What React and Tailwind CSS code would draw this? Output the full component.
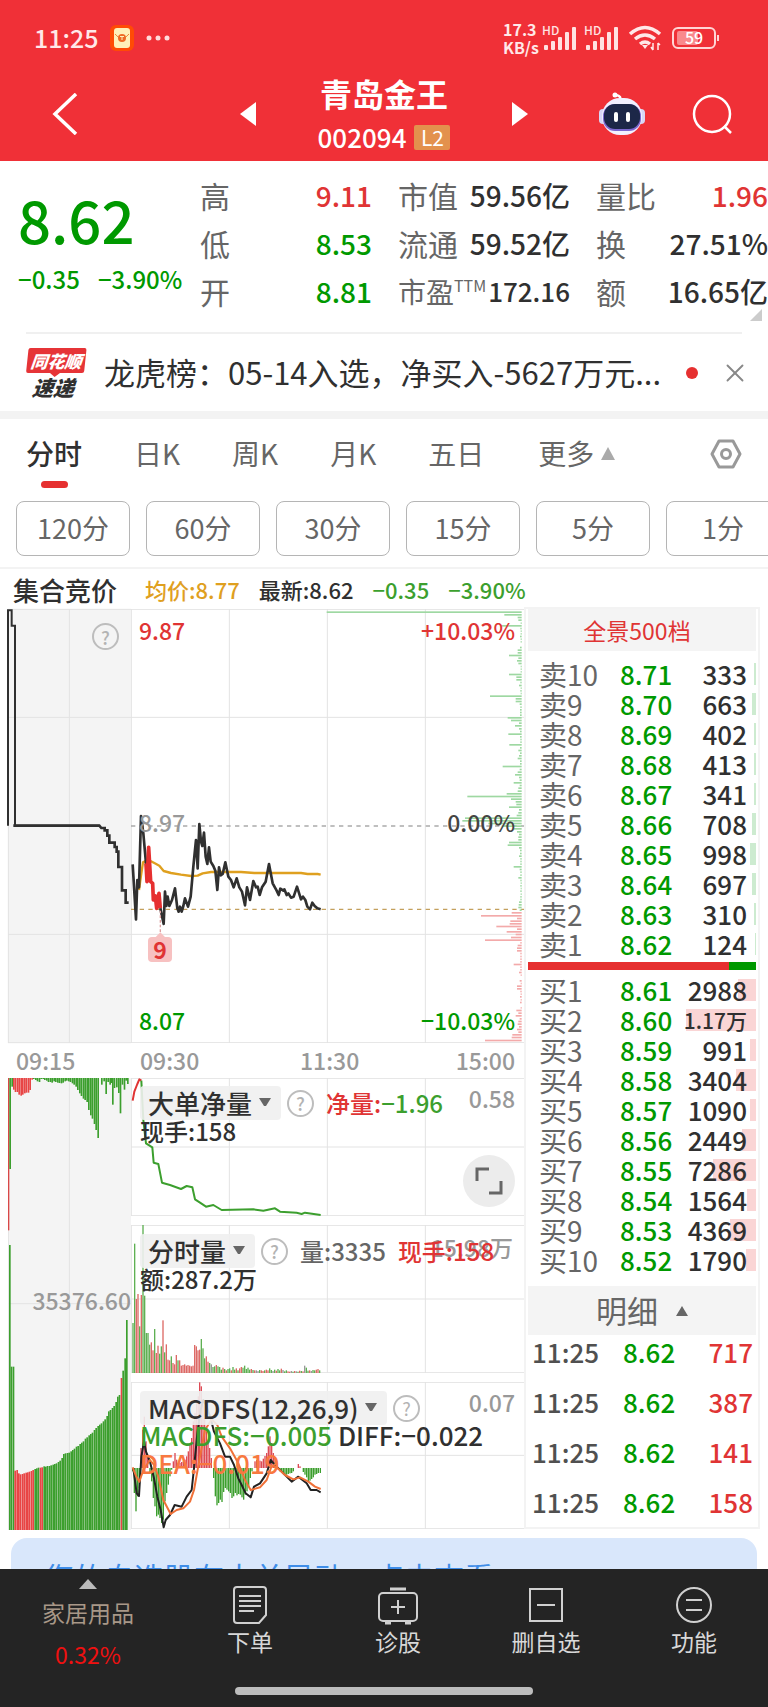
import React from 'react';
import { X } from 'lucide-react';

const stats = [
  [['高', '9.11', 'text-[#e03434]'], ['低', '8.53', 'text-[#009900]'], ['开', '8.81', 'text-[#009900]']],
  [['市值', '59.56亿', 'text-[#303030]'], ['流通', '59.52亿', 'text-[#303030]'], ['市盈', '172.16', 'text-[26px] text-[#303030]']],
  [['量比', '1.96', 'text-[#e03434]'], ['换', '27.51%', 'text-[#303030]'], ['额', '16.65亿', 'text-[#303030]']],
];

const tabs = ['分时', '日K', '周K', '月K', '五日'];
const periods = ['120分', '60分', '30分', '15分', '5分', '1分'];

// label, price, volume, depth bar width in px
const asks = [
  ['卖10', '8.71', '333', 2], ['卖9', '8.70', '663', 4], ['卖8', '8.69', '402', 2], ['卖7', '8.68', '413', 2],
  ['卖6', '8.67', '341', 2], ['卖5', '8.66', '708', 4], ['卖4', '8.65', '998', 6], ['卖3', '8.64', '697', 4],
  ['卖2', '8.63', '310', 2], ['卖1', '8.62', '124', 1],
];
const bids = [
  ['买1', '8.61', '2988', 18], ['买2', '8.60', '1.17万', 70], ['买3', '8.59', '991', 6], ['买4', '8.58', '3404', 20],
  ['买5', '8.57', '1090', 6], ['买6', '8.56', '2449', 14], ['买7', '8.55', '7286', 43], ['买8', '8.54', '1564', 9],
  ['买9', '8.53', '4369', 26], ['买10', '8.52', '1790', 10],
];
const trades = ['717', '387', '141', '158'];

// chart units are thirds of a pixel
const priceA = '5,766 15,931 19,813 24,835 30,621 37,673 45,763 48,800';
const priceHot = '45,763 48,818 53,715 59,818 65,823 67,873 73,861 77,898 84,853 88,898';
const priceB = '88,898 98,945 102,848 106,891 110,863 115,891 123,873 132,838 139,898 143,908 147,893 152,908 157,891 162,868 171,893 179,863 187,773 195,693 200,778 205,645 210,698 214,711 219,671 224,743 229,765 234,715 239,758 247,771 253,785 259,843 264,775 269,799 275,795 283,760 292,803 300,813 308,835 317,808 325,835 333,848 342,889 348,835 357,873 367,816 375,835 380,833 386,858 393,835 404,818 414,765 425,823 437,845 443,858 448,839 457,845 460,841 467,858 472,853 480,866 488,863 498,833 510,871 516,863 523,873 529,893 537,901 544,881 551,891 559,898 569,901';
const average = '24,843 30,800 36,760 46,755 57,755 70,762 85,770 98,786 120,792 150,797 180,801 200,800 215,793 240,789 330,789 370,792 510,792 530,795 560,795 569,797';

const profile = [
  585, 52, 12, 10, 3, 62, 4, 3, 3, 5, 3, 3, 0, 5, 12, 12, 38, 10, 14, 10, 3, 3, 3, 38, 16, 16, 4, 8, 3, 4, 3, 95, 18, 18, 6, 4, 5, 5, 5, 42,
  32, 8, 20, 8, 5, 40, 5, 4, 4, 37, 5, 10, 5, 8, 12, 5, 5, 57, 6, 12, 20, 8, 6, 24, 6, 10, 12, 45, 163, 32, 18, 16, 38, 8, 10, 15, 170, 178, 100, 60,
  24, 14, 8, 10, 10, 38, 42, 8, 5, 5, 8, 4, 4, 4, 24, 6, 4, 4, 10, 4, 3, 4, 3, 4, 3, 4, 4, 8, 9, 10, 6, 30, 122, 14, 34, 36, 76, 14, 45, 18,
  32, 110, 4, 12, 14, 14, 4, 4, 4, 4, 24, 4, 4, 8, 3, 0, 6, 3, 14, 14, 4, 3, 5, 3, 5, 0, 3, 16, 10, 18, 6, 10, 12, 8, 14, 10, 28, 30, 110,
];

const volume = [
  150, 388, 222, 237, 140, 234, 444, 232, 120, 120, 85, 92, 68, 132, 60, 82, 58, 80, 158, 62, 86, 40, 38, 50, 30, 26, 54, 38, 38, 22, 24, 26, 22, 24, 22, 20, 22,
  84, 80, 68, 70, 102, 74, 44, 50, 34, 30, 26, 18, 20, 24, 20, 18, 10, 16, 12, 8, 12, 14, 8, 18, 10, 14, 8, 14, 18, 16, 22, 12, 16, 10, 12, 9, 8, 8, 6, 9, 8,
  6, 8, 10, 8, 14, 9, 6, 10, 7, 12, 8, 13, 9, 5, 8, 5, 4, 6, 4, 6, 5, 4, 7, 6, 5, 22, 16, 7, 8, 6, 9, 8, 10, 12, 8,
];
const volumeTone = 'ggrrgrgggggrrgrrggrgrrrgrrrgrrrrrrrrrrrrrgggrrgwggrgggrgrggrggrgrrgggggrgrwwgrrgrrggwgrggrwggrrwgrwgrgrwggrwggrrgww';

const macd = [
  [5, 10], [10, 75], [15, 130], [20, 85], [25, 60], [30, -60], [35, -115], [40, -154], [45, -80], [50, -40], [57, 15], [62, 40], [67, 90], [72, 115],
  [77, 145], [82, 140], [87, 150], [92, 165], [97, 155], [102, 100], [107, 75], [112, 50], [117, 25], [122, 5], [127, -20], [132, -45], [137, -25],
  [142, -15], [147, -15], [152, -18], [157, -20], [162, -25], [167, -35], [172, -50], [177, -70], [182, -90], [187, -140], [192, -165], [197, -200],
  [202, -215], [206, -257], [211, -245], [216, -190], [221, -150], [226, -110], [231, -80], [236, -60], [241, -30], [248, 30], [253, 85], [258, 112],
  [263, 105], [268, 95], [273, 102], [278, 72], [283, 60], [288, 65], [293, 70], [298, 75], [303, 90], [308, 85], [313, 75], [318, 82], [323, 78],
  [328, 80], [333, 88], [338, 95], [343, 80], [348, 70], [353, 55], [358, 30], [363, 10], [372, -20], [377, -24], [382, -25], [387, -22], [392, -20],
  [397, -28], [402, -36], [407, -45], [412, -65], [417, -95], [422, -75], [427, -45], [432, -30], [437, -8], [442, 5], [447, 10], [452, 15], [457, 18],
  [462, 20], [467, 20], [472, 18], [477, 16], [482, 15], [487, 10], [502, -12], [507, -5], [517, 12], [522, 20], [527, 28], [532, 40], [537, 38],
  [542, 33], [547, 28], [552, 20], [557, 18], [562, 15], [568, 15],
];

const hanging = [
  [6, 273], [12, 26], [17, 35], [22, 42], [28, 42], [33, 50], [39, 53], [44, 50], [50, 46], [55, 44], [61, 44], [66, 36], [72, 5], [77, 3], [83, 6],
  [88, 10], [94, 12], [99, 3], [105, 3], [110, 6], [116, 8], [121, 12], [127, 12], [132, 14], [138, 10], [143, 12], [149, 14], [154, 15], [160, 16],
  [165, 14], [171, 10], [176, 8], [182, 10], [187, 12], [193, 16], [198, 20], [204, 26], [209, 36], [215, 46], [220, 54], [226, 62], [231, 66],
  [237, 72], [242, 96], [248, 112], [253, 122], [259, 138], [264, 156], [270, 180], [281, 20], [288, 10], [294, 48], [300, 12], [306, 20], [310, 15],
  [314, 80], [319, 30], [326, 28], [332, 45], [337, 106], [343, 20], [349, 35], [354, 8], [359, 18],
];
const matched = [
  855, 490, 490, 178, 180, 170, 167, 168, 170, 172, 173, 175, 177, 180, 183, 185, 187, 187, 188, 191, 190, 192, 192, 194, 196, 198, 200, 204, 208, 216,
  228, 230, 231, 232, 236, 240, 244, 250, 252, 258, 262, 266, 274, 278, 284, 288, 292, 300, 306, 312, 316, 320, 326, 332, 342, 356, 360, 366, 372, 384, 400, 405, 456, 478, 515, 630,
];

const isHotMatched = (i) => (i >= 3 && i <= 13) || (i >= 17 && i <= 18) || i === 62;

const Grid = ({ w, h, xs, ys }) => (
  <g stroke="#e3e3e3" strokeWidth="3">
    {xs.map((x) => <path key={x} d={`M${x} 0V${h}`} />)}
    {ys.map((y) => <path key={y} d={`M0 ${y}H${w}`} />)}
  </g>
);

const Help = () => (
  <button aria-label="帮助" className="flex h-[27px] w-[27px] shrink-0 items-center justify-center rounded-full border-2 border-[#bdbdbd] text-lg leading-none text-[#b3b3b3]">?</button>
);

const Indicator = ({ name, label }) => (
  <label className="relative block h-[34px] rounded bg-[#f0f0f0]/90">
    <select aria-label={label} className="h-full appearance-none bg-transparent pr-7 pl-2 text-[26px] leading-[34px] font-medium text-[#303030]">
      <option>{name}</option>
    </select>
    <svg className="pointer-events-none absolute top-3 right-2.5" width="12" height="9" viewBox="0 0 12 9"><path d="M0 0H12L7 8H5Z" fill="#666" /></svg>
  </label>
);

const Signal = () => (
  <svg className="overflow-visible" width="36" height="24" viewBox="0 0 36 24" fill="#ffe2e2">
    <text x="0" y="9" fontSize="12" fontWeight="500">HD</text>
    <rect x="2" y="19" width="4" height="5" rx="1" />
    <rect x="9" y="15" width="4" height="9" rx="1" />
    <rect x="16" y="11" width="4" height="13" rx="1" />
    <rect x="23" y="6" width="4" height="18" rx="1" />
    <rect x="30" y="1" width="4" height="23" rx="1" />
  </svg>
);

const StatusBar = () => (
  <div className="flex h-[75px] items-center pr-12 pl-[34px] text-[#ffe8e8]">
    <span className="text-[25px] font-medium">11:25</span>
    <svg className="ml-3" width="24" height="26" viewBox="0 0 24 26">
      <rect width="24" height="26" rx="6" fill="#ff4b05" />
      <rect x="4" y="3" width="16" height="20" rx="3" fill="#fff0b8" />
      <path d="M5 9Q12 18 19 9" fill="none" stroke="#e88b3c" />
      <circle cx="12" cy="13" r="4" fill="#ef6a24" />
      <path d="M10 11.500H14M12 11.500V15" stroke="#fff0b8" />
    </svg>
    <svg className="ml-3" width="24" height="6" viewBox="0 0 24 6" fill="#ffdcdc"><circle cx="3" cy="3" r="2.500" /><circle cx="12" cy="3" r="2.500" /><circle cx="21" cy="3" r="2.500" /></svg>
    <div className="ml-auto w-[39px] text-base leading-[18px] font-bold">17.3<br />KB/s</div>
    <Signal />
    <div className="ml-1.5"><Signal /></div>
    <svg className="ml-2" width="34" height="26" viewBox="0 0 34 26" fill="none" stroke="#ffe8e8" strokeWidth="3.500">
      <path d="M2 9Q17 -4 32 9M7 14Q17 6 27 14M12 19Q17 15 22 19" />
      <path d="M14 20L17 24L20 20Z" fill="#ffe8e8" stroke="none" />
      <path d="M25 18V25M30 18V25M23 22L25 25M30 18L32 20" strokeWidth="1.500" />
    </svg>
    <svg className="ml-2.5 overflow-visible" width="48" height="22" viewBox="0 0 48 22">
      <rect x="1" y="1" width="42" height="20" rx="5" fill="none" stroke="#ffd5d5" strokeWidth="2" />
      <rect x="5" y="4" width="21" height="14" rx="2" fill="#f9898c" />
      <path d="M46 8V14" stroke="#ffd5d5" strokeWidth="2" />
      <text x="22" y="17" textAnchor="middle" fontSize="16" fontWeight="500" fill="#fff">59</text>
    </svg>
  </div>
);

const Header = () => (
  <header className="bg-[#f03037] text-white">
    <StatusBar />
    <nav className="grid h-[86px] grid-cols-[1fr_289px_1fr] pb-3">
      <div className="flex items-center pl-[52px]">
        <button aria-label="返回">
          <svg width="26" height="42" viewBox="0 0 26 42" fill="none" stroke="#fff" strokeWidth="3.500"><path d="M24 1L3 21L24 41" /></svg>
        </button>
      </div>
      <div className="flex items-center justify-between">
        <button aria-label="上一只"><svg width="16" height="24" viewBox="0 0 16 24"><path d="M16 0V24L0 12Z" fill="#fff" /></svg></button>
        <div>
          <h1 className="text-center text-[32px] leading-9 font-bold">青岛金王</h1>
          <div className="mt-2.5 flex items-center gap-2">
            <span className="text-[26px] leading-8 font-medium">002094</span>
            <span className="h-[25px] w-9 rounded-xs bg-[#e3914d] text-center text-[21px] leading-[25px]">L2</span>
          </div>
        </div>
        <button aria-label="下一只"><svg width="16" height="24" viewBox="0 0 16 24"><path d="M0 0V24L16 12Z" fill="#fff" /></svg></button>
      </div>
      <div className="flex items-center justify-end gap-[46px] pr-9">
        <button aria-label="智能助手">
          <svg width="48" height="44" viewBox="0 0 48 44">
            <path d="M22 9Q24 4 18 3" fill="none" stroke="#fff" strokeWidth="2.500" />
            <circle cx="17" cy="3" r="2.500" fill="#fff" />
            <rect x="1" y="17" width="8" height="15" rx="4" fill="#d8d6f5" />
            <rect x="39" y="17" width="8" height="15" rx="4" fill="#d8d6f5" />
            <rect x="4" y="6" width="40" height="37" rx="18" fill="#f2f0ff" />
            <rect x="5" y="12" width="38" height="27" rx="12" fill="#7d68cf" />
            <rect x="6" y="12" width="36" height="25" rx="11" fill="#1c2748" />
            <rect x="16" y="20" width="4" height="10" rx="2" fill="#fff" />
            <rect x="28" y="20" width="4" height="10" rx="2" fill="#fff" />
          </svg>
        </button>
        <button aria-label="搜索">
          <svg width="40" height="40" viewBox="0 0 40 40" fill="none" stroke="#fff" strokeWidth="2.500"><circle cx="20" cy="20" r="18" /><path d="M32 32L39 39" /></svg>
        </button>
      </div>
    </nav>
  </header>
);

const Quote = () => (
  <section className="flex h-[171px] pt-[10px] font-medium">
    <div className="w-[200px] shrink-0 pl-[18px] text-[#009900]">
      <div className="mt-3 text-[58px] leading-[72px]">8.62</div>
      <div className="mt-1.5 flex gap-[18px] text-2xl leading-9 whitespace-nowrap"><span>−0.35</span><span>−3.90%</span></div>
    </div>
    <div className="relative grid flex-1 grid-cols-3 gap-x-[26px]">
      {stats.map((col) => (
        <dl key={col[0][0]} className="text-[28px] leading-[48px] whitespace-nowrap">
          {col.map(([label, value, tone]) => (
            <div key={label} className="flex h-12 justify-between">
              <dt className={label === '市盈' ? 'flex text-[28px] font-normal text-[#666]' : 'text-[30px] font-normal text-[#666]'}>
                {label}
                {label === '市盈' && <span className="text-base leading-9">TTM</span>}
              </dt>
              <dd className={tone}>{value}</dd>
            </div>
          ))}
        </dl>
      ))}
      <svg className="absolute right-1.5 bottom-[11px]" width="12" height="12" viewBox="0 0 12 12"><path d="M12 0V12H0Z" fill="#ccc" /></svg>
    </div>
  </section>
);

const News = () => (
  <section className="mx-[26px] flex h-[79px] items-center border-t-2 border-[#f0f0f0]">
    <div className="w-[58px] -skew-x-6 text-center leading-none font-black italic">
      <div className="rounded-xs bg-[#e63437] py-1 text-[17px] text-white">同花顺</div>
      <svg className="mx-auto" width="10" height="4" viewBox="0 0 10 4"><path d="M0 0H10L5 4Z" fill="#e63437" /></svg>
      <div className="text-[21px] text-[#303030]">速递</div>
    </div>
    <p className="ml-5 flex-1 text-[31px] whitespace-nowrap text-[#303030]">龙虎榜：05-14入选，净买入-5627万元...</p>
    <span className="mr-[22px] h-3 w-3 rounded-full bg-[#e63030]" />
    <button aria-label="关闭" className="-mr-2"><X size={30} strokeWidth={1.5} color="#888" /></button>
  </section>
);

const Tabs = () => (
  <section className="h-[158px] overflow-hidden border-t-8 border-b-2 border-[#f3f3f3]">
    <div className="flex h-[82px] items-start gap-[52px] px-[26px] pt-3.5 text-[28px] leading-10 text-[#666]">
      {tabs.map((tab, i) => (
        <button key={tab} className={i === 0 ? 'flex flex-col items-center font-medium text-[#303030]' : ''}>
          {tab}
          {i === 0 && <span className="mt-2 h-[7px] w-[27px] rounded-full bg-[#e63030]" />}
        </button>
      ))}
      <button className="flex items-center gap-[7px] pl-0.5">
        更多
        <svg width="14" height="13" viewBox="0 0 14 13"><path d="M7 0L14 13H0Z" fill="#aaa" /></svg>
      </button>
      <button aria-label="设置" className="ml-auto pt-1.5">
        <svg width="32" height="30" viewBox="0 0 32 30" fill="none" stroke="#999" strokeWidth="3"><path d="M9 2H23L30 15L23 28H9L2 15Z" strokeLinejoin="round" /><circle cx="16" cy="15" r="4.500" /></svg>
      </button>
    </div>
    <div className="flex gap-4 pl-4 text-[27px] text-[#666]">
      {periods.map((p) => (
        <button key={p} className="h-[55px] w-[114px] shrink-0 rounded-lg border border-[#b5b5b5]">{p}</button>
      ))}
    </div>
  </section>
);

const PriceChart = () => (
  <div className="grid h-[434px] grid-cols-[123px_1fr] font-medium">
    <div className="relative bg-[#f4f4f4]">
      <svg className="h-full w-full overflow-visible" viewBox="0 0 369 1302" preserveAspectRatio="none">
        <Grid w={369} h={1302} xs={[1, 184]} ys={[1, 325, 976, 1301]} />
        <path d="M0 650V4H11V50H21V650H274" fill="none" stroke="#303030" strokeWidth="6" />
        <path d="M16 650H274L280 657H290V664H298V680H304V701H320V714H326V728H331V774H342V844H353V881H362" fill="none" stroke="#303030" strokeWidth="8" />
      </svg>
      <div className="absolute top-3.5 right-3"><Help /></div>
    </div>
    <div className="relative text-[23px] leading-7">
      <svg className="h-full w-full" viewBox="0 0 1179 1302" preserveAspectRatio="none">
        <Grid w={1179} h={1302} xs={[1, 295, 589, 883]} ys={[1, 325, 976, 1301]} />
        <path d="M0 651H1179" stroke="#aaa" strokeWidth="5" strokeDasharray="13 13" />
        <path d="M0 901H1179" stroke="#c4a05c" strokeWidth="4" strokeDasharray="13 13" />
        {profile.map((len, i) => (
          <rect key={i} x={1172 - len} y={Math.round(7 + i * 8.13)} width={len} height="5" fill={i < 111 ? '#9ed8a2' : '#f3aaaa'} />
        ))}
        <g fill="none" strokeLinejoin="round">
          <polyline points={average} stroke="#dfa01f" strokeWidth="7" />
          <polyline points={priceA} stroke="#303030" strokeWidth="8" />
          <polyline points={priceHot} stroke="#e63030" strokeWidth="11" />
          <polyline points={priceB} stroke="#303030" strokeWidth="8" />
        </g>
        <path d="M88 905V970" stroke="#dda0a0" strokeWidth="4" strokeDasharray="8 6" />
        <path d="M72 986L88 970L104 986Z" fill="#f7c1c1" />
      </svg>
      <span className="absolute top-[7px] left-2 text-[#e03434]">9.87</span>
      <span className="absolute top-[7px] right-[9px] text-[#e03434]">+10.03%</span>
      <span className="absolute top-[199px] left-2 text-[#999]">8.97</span>
      <span className="absolute top-[199px] right-[9px] text-[#444]">0.00%</span>
      <span className="absolute bottom-[9px] left-2 text-[#009900]">8.07</span>
      <span className="absolute right-[9px] bottom-[9px] text-[#009900]">−10.03%</span>
      <span className="absolute top-82 left-[17px] h-[25px] w-6 rounded bg-[#f7c1c1] text-center leading-[25px] font-bold text-[#e03434]">9</span>
    </div>
  </div>
);

const AuctionVolume = () => (
  <div className="relative bg-[#f4f4f4]">
    <svg className="h-full w-full" viewBox="0 0 369 1356" preserveAspectRatio="none">
      <Grid w={369} h={1356} xs={[1, 184]} ys={[677]} />
      <rect x="0" y="0" width="4" height="457" fill="#d94747" />
      {hanging.map(([x, len]) => (
        <rect key={x} x={x - 2} y="0" width="5" height={len} fill={x > 14 && x < 75 ? '#e84545' : '#3c9f2e'} />
      ))}
      {matched.map((len, i) => (
        <rect key={i} x={Math.round(3 + i * 5.4)} y={1356 - len} width="5" height={len} fill={isHotMatched(i) ? '#e84545' : '#3c9f2e'} />
      ))}
    </svg>
    <span className="absolute top-[208px] right-0 text-[23px] leading-7 font-medium text-[#999]">35376.60</span>
  </div>
);

const NetVolume = () => (
  <div className="relative h-[138px]">
    <svg className="h-full w-full" viewBox="0 0 1179 414" preserveAspectRatio="none">
      <Grid w={1179} h={414} xs={[1, 295, 589, 883]} ys={[1, 207, 413]} />
      <g fill="none" strokeWidth="6" strokeLinejoin="round">
        <polyline points="5,68 10,41 19,18 25,4 31,8" stroke="#e03434" />
        <polyline points="31,8 37,126 45,196 64,208 68,254 82,258 93,314 117,321 150,333 167,324 184,328 192,364 207,374 225,386 247,381 272,396 367,394 397,398 432,391 447,401 497,404 512,408 522,404 569,411" stroke="#3c9f2e" />
      </g>
    </svg>
    <div className="absolute top-2 left-[9px] flex items-center gap-1.5 text-2xl font-medium whitespace-nowrap">
      <Indicator name="大单净量" label="指标一" />
      <Help />
      <span className="pl-1.5 text-[#e03434]">净量:<b className="font-medium text-[#3c9f2e]">−1.96</b></span>
    </div>
    <span className="absolute top-[39px] left-[9px] text-2xl leading-7 font-medium text-[#303030]">现手:158</span>
    <span className="absolute top-1.5 right-[9px] text-[23px] leading-7 font-medium text-[#999]">0.58</span>
    <button aria-label="全屏" className="absolute right-[9px] bottom-[9px] flex h-[52px] w-[52px] items-center justify-center rounded-full bg-[#ececec]">
      <svg width="28" height="28" viewBox="0 0 28 28" fill="none" stroke="#666" strokeWidth="3"><path d="M2 14V2H14M26 14V26H14" /></svg>
    </button>
  </div>
);

const MinuteVolume = () => (
  <div className="relative h-[148px]">
    <svg className="h-full w-full" viewBox="0 0 1179 444" preserveAspectRatio="none">
      <Grid w={1179} h={444} xs={[1, 295, 589, 883]} ys={[1, 222, 443]} />
      {volume.map((len, i) => (
        <rect key={i} x={4 + i * 5} y={444 - len} width="4" height={len} fill={volumeTone[i] === 'g' ? '#5fb053' : volumeTone[i] === 'r' ? '#dd6a66' : '#999'} />
      ))}
    </svg>
    <span className="absolute top-2 right-[11px] text-[23px] leading-7 font-medium text-[#999]">15.98万</span>
    <div className="absolute top-[9px] left-[9px] flex items-center gap-1.5 text-2xl font-medium whitespace-nowrap">
      <Indicator name="分时量" label="指标二" />
      <Help />
      <span className="pl-1.5 text-[#666]">量:3335</span>
      <span className="pl-1.5 text-[#e03434]">现手:158</span>
    </div>
    <span className="absolute top-10 left-[9px] text-2xl leading-7 font-medium text-[#303030]">额:287.2万</span>
  </div>
);

const Macd = () => (
  <div className="relative h-[147px]">
    <svg className="h-full w-full" viewBox="0 0 1179 441" preserveAspectRatio="none">
      <Grid w={1179} h={441} xs={[1, 295, 589, 883]} ys={[1, 220, 440]} />
      {macd.map(([x, len]) => (
        <rect key={x} x={x - 2} y={len > 0 ? 258 : 258 + len} width="4" height={Math.abs(len)} fill={len > 0 ? '#3c9f2e' : '#dd4b55'} />
      ))}
      <g fill="none" strokeWidth="6" strokeLinejoin="round">
        <polyline points="7,259 17,334 24,342 31,224 39,179 45,209 57,239 69,289 79,344 89,384 98,436 104,414 117,399 131,369 152,374 167,344 182,324 189,259 199,154 209,84 217,54 227,74 239,109 249,149 267,184 282,224 297,224 309,249 322,289 332,309 344,334 359,346 369,314 387,304 407,274 419,234 432,249 452,269 482,299 502,284 527,304 539,324 557,324 569,331" stroke="#222" />
        <polyline points="5,256 15,282 25,299 37,264 57,234 69,249 82,284 97,354 119,396 137,384 157,379 177,359 189,324 207,224 222,144 242,112 259,129 272,164 297,199 322,244 342,294 359,324 387,316 407,294 422,252 437,256 462,279 487,292 507,286 532,299 552,314 569,321" stroke="#f07138" />
      </g>
    </svg>
    <div className="absolute top-[9px] left-[9px] flex items-center gap-1.5">
      <Indicator name="MACDFS(12,26,9)" label="指标三" />
      <Help />
    </div>
    <div className="absolute top-[39px] left-[9px] text-[26px] leading-7 font-medium whitespace-nowrap">
      <div className="flex gap-1.5"><span className="text-[#3c9f2e]">MACDFS:−0.005</span><span className="text-[#303030]">DIFF:−0.022</span></div>
      <div className="text-[#f87840]">DEA:−0.019</div>
    </div>
    <span className="absolute top-1.5 right-[9px] text-[23px] leading-7 font-medium text-[#999]">0.07</span>
  </div>
);

const BookTable = ({ rows, fill, label: title }) => (
  <table aria-label={title} className="w-full table-fixed border-collapse">
    <tbody>
      {rows.map(([label, price, amount, depth]) => (
        <tr key={label} className="h-[30px] leading-[30px] whitespace-nowrap">
          <th className="w-[92px] p-0 pl-[11px] text-left text-[28px] font-normal text-[#666]">{label}</th>
          <td className="w-[58px] p-0 text-[26px] font-medium text-[#009900]">{price}</td>
          <td className={`relative p-0 pr-[9px] text-right font-medium text-[#303030] ${amount.includes('万') ? 'text-[21px]' : 'text-[26px]'}`}>
            <span className={`absolute top-1 right-0 h-[22px] ${fill}`} style={{ width: depth }} />
            <span className="relative">{amount}</span>
          </td>
        </tr>
      ))}
    </tbody>
  </table>
);

const OrderBook = () => (
  <aside className="w-[236px] shrink-0 border-2 border-[#f3f3f3] px-0.5">
    <button className="block h-[42px] w-full bg-[#f4f4f4] pr-2.5 text-[23px] text-[#e03434]">全景500档</button>
    <div className="h-2" />
    <BookTable rows={asks} fill="bg-[#cdebd0]" label="卖盘" />
    <div className="mt-[3px] mb-[5px] flex h-2">
      <div className="flex-1 bg-[#e63030]" />
      <div className="w-[27px] bg-[#009900]" />
    </div>
    <BookTable rows={bids} fill="bg-[#fad5d5]" label="买盘" />
    <button className="mt-[11px] flex h-[49px] w-full items-center justify-center gap-[18px] bg-[#f4f4f4] text-[31px] text-[#666]">
      明细
      <svg width="12" height="10" viewBox="0 0 12 10"><path d="M6 0L12 10H0Z" fill="#666" /></svg>
    </button>
    <ul className="flex flex-col gap-4 pr-[3px] pb-2 pl-1 text-[26px] leading-[34px] font-medium">
      {trades.map((t) => (
        <li key={t} className="flex">
          <span className="w-[91px] text-[#505050]">11:25</span>
          <span className="text-[#009900]">8.62</span>
          <span className="ml-auto text-[#e03434]">{t}</span>
        </li>
      ))}
    </ul>
  </aside>
);

const BottomNav = () => (
  <nav className="fixed inset-x-0 bottom-0 h-[138px] bg-[#242424] text-[23px] leading-8 text-[#d8d8d8]">
    <div className="flex h-[118px]">
      <button className="flex w-44 flex-col items-center pt-2.5">
        <svg width="18" height="10" viewBox="0 0 18 10"><path d="M9 0L18 10H0Z" fill="#bbb" /></svg>
        <span className="mt-[7px] text-[#a89888]">家居用品</span>
        <span className="mt-2.5 text-[#f01010]">0.32%</span>
      </button>
      <button className="flex flex-1 flex-col items-center pt-4">
        <svg width="36" height="40" viewBox="0 0 36 40" fill="none" stroke="#d0d0d0" strokeWidth="2"><path d="M5 2H31Q34 2 34 5V30L27 38H5Q2 38 2 35V5Q2 2 5 2ZM7 11H29M7 16H29M7 21H29M7 26H22" /></svg>
        <span>下单</span>
      </button>
      <button className="flex flex-1 flex-col items-center pt-4">
        <svg width="42" height="40" viewBox="0 0 42 40" fill="none" stroke="#d0d0d0" strokeWidth="2"><rect x="2" y="8" width="38" height="28" rx="4" /><path d="M13 4H29M8 38H14M28 38H34" strokeWidth="3" /><path d="M14 22H28M21 15V29" /></svg>
        <span>诊股</span>
      </button>
      <button className="flex flex-1 flex-col items-center pt-4">
        <svg width="36" height="40" viewBox="0 0 36 40" fill="none" stroke="#d0d0d0" strokeWidth="2"><rect x="2" y="4" width="32" height="32" /><path d="M9 20H27" /></svg>
        <span>删自选</span>
      </button>
      <button className="flex flex-1 flex-col items-center pt-4">
        <svg width="38" height="40" viewBox="0 0 38 40" fill="none" stroke="#d0d0d0" strokeWidth="2"><circle cx="19" cy="20" r="17" /><path d="M11 15H27M11 25H27" /></svg>
        <span>功能</span>
      </button>
    </div>
    <div className="mx-auto h-2 w-[298px] rounded-full bg-[#bdbdbd]" />
  </nav>
);

const App = () => (
  <div className="min-h-screen overflow-x-hidden bg-white font-['Noto_Sans_CJK_SC',sans-serif]">
    <Header />
    <Quote />
    <News />
    <Tabs />
    <main className="flex items-start pr-2 pl-2">
      <div className="min-w-0 flex-1">
        <div className="flex h-10 items-center pl-[5px] text-[22px] font-medium whitespace-nowrap">
          <span className="mr-7 text-[26px] text-[#303030]">集合竞价</span>
          <span className="mr-[19px] text-[#dfa01f]">均价:8.77</span>
          <span className="mr-[19px] text-[#303030]">最新:8.62</span>
          <span className="mr-[19px] text-[#3c9f2e]">−0.35</span>
          <span className="text-[#3c9f2e]">−3.90%</span>
        </div>
        <PriceChart />
        <div className="flex h-[35px] items-center pr-[9px] pl-2 text-[23px] font-medium text-[#999]">
          <span className="w-[124px]">09:15</span>
          <span className="w-[160px]">09:30</span>
          <span>11:30</span>
          <span className="ml-auto">15:00</span>
        </div>
        <div className="grid grid-cols-[123px_1fr]">
          <AuctionVolume />
          <div className="flex flex-col gap-[9px]">
            <NetVolume />
            <MinuteVolume />
            <Macd />
          </div>
        </div>
      </div>
      <div className="flex pt-[38px]"><OrderBook /></div>
    </main>
    <section className="mx-[11px] mt-2 flex h-[76px] items-center justify-between rounded-2xl bg-[#d9e7fb] px-[33px] text-[30px] text-[#3f8de8]">
      <a href="#alert">您的自选股有大单异动，点击查看</a>
      <button aria-label="关闭提示"><X size={22} color="#8aa4c8" /></button>
    </section>
    <BottomNav />
  </div>
);

export default App;
